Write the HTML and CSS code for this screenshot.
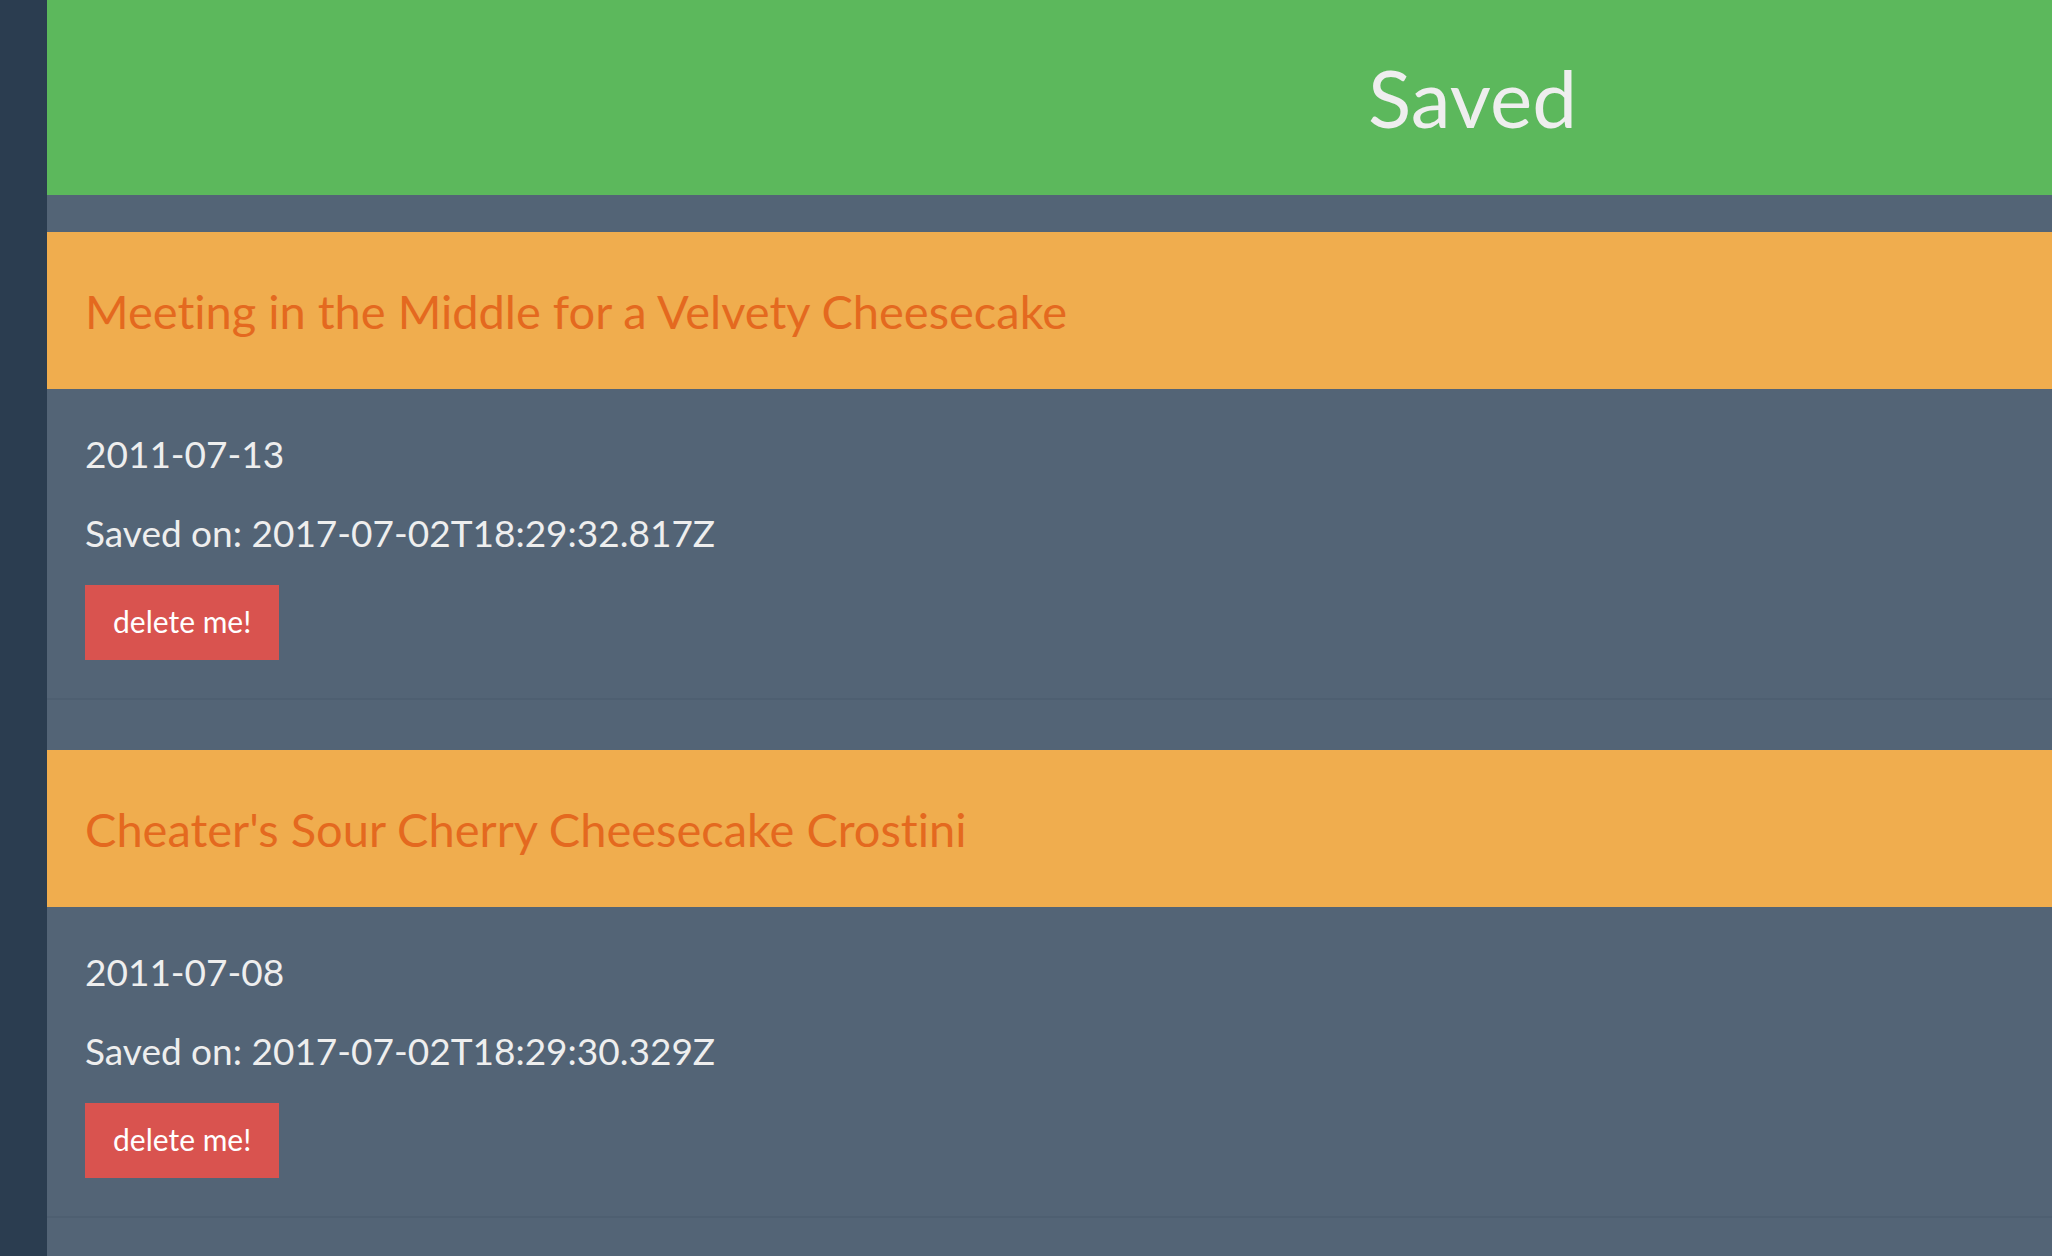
FILE: index.html
```html
<!DOCTYPE html>
<html lang="en">
<head>
<meta charset="utf-8">
<title>Saved</title>
<link rel="stylesheet" href="styles.css">
</head>
<body>
<div class="layout">
  <aside class="sidebar"></aside>
  <main class="main">
    <header class="banner">
      <h1 class="banner-title">Saved</h1>
    </header>
    <section class="cards">
      <article class="card">
        <div class="card-heading">
          <h4 class="card-title">Meeting in the Middle for a Velvety Cheesecake</h4>
        </div>
        <div class="card-body">
          <p class="card-line">2011-07-13</p>
          <p class="card-line">Saved on: 2017-07-02T18:29:32.817Z</p>
          <button class="btn-delete" type="button">delete me!</button>
        </div>
      </article>
      <article class="card">
        <div class="card-heading">
          <h4 class="card-title">Cheater's Sour Cherry Cheesecake Crostini</h4>
        </div>
        <div class="card-body">
          <p class="card-line">2011-07-08</p>
          <p class="card-line">Saved on: 2017-07-02T18:29:30.329Z</p>
          <button class="btn-delete" type="button">delete me!</button>
        </div>
      </article>
    </section>
  </main>
</div>
</body>
</html>
```
FILE: styles.css
```css
html, body {
  margin: 0;
  padding: 0;
  height: 100%;
}
body {
  font-family: Lato, "Open Sans", "Liberation Sans", sans-serif;
  font-variant-ligatures: none;
  font-feature-settings: "liga" 0, "clig" 0;
  background: #536476;
  color: #eeeeee;
  overflow: hidden;
}
.layout {
  display: flex;
  min-height: 100vh;
}
.sidebar {
  width: 47px;
  flex: 0 0 47px;
  background: #2b3d50;
}
.main {
  flex: 1;
  background: #536476;
}
.banner {
  height: 195px;
  background: #5cb85c;
  box-sizing: border-box;
  padding-left: 1321px;
  display: flex;
  align-items: center;
}
.banner-title {
  margin: 0;
  font-size: 80px;
  font-weight: 400;
  line-height: 1.1;
  color: #eeeeee;
  position: relative;
  top: -1px;
}
.cards {
  padding-top: 37px;
}
.card {
  margin-bottom: 50px;
}
.card-heading {
  background: #f0ad4e;
  height: 157px;
  box-sizing: border-box;
  padding: 0 38px;
  display: flex;
  align-items: center;
}
.card-title {
  margin: 0;
  font-size: 47px;
  font-weight: 400;
  line-height: 1.1;
  color: #e4691f;
  position: relative;
  top: 1px;
}
.card-body {
  padding: 38px 38px 38px;
  border-bottom: 2px solid #4e5f71;
}
.card-line {
  margin: 0 0 26px;
  font-size: 37px;
  line-height: 53px;
  color: #eeeeee;
}
.btn-delete {
  display: block;
  font-family: Lato, "Open Sans", "Liberation Sans", sans-serif;
  font-variant-ligatures: none;
  font-size: 30px;
  line-height: 45px;
  padding: 14px 28px 16px;
  height: 75px;
  box-sizing: border-box;
  border: 0;
  background: #d9534f;
  color: #ffffff;
  cursor: pointer;
}
```
